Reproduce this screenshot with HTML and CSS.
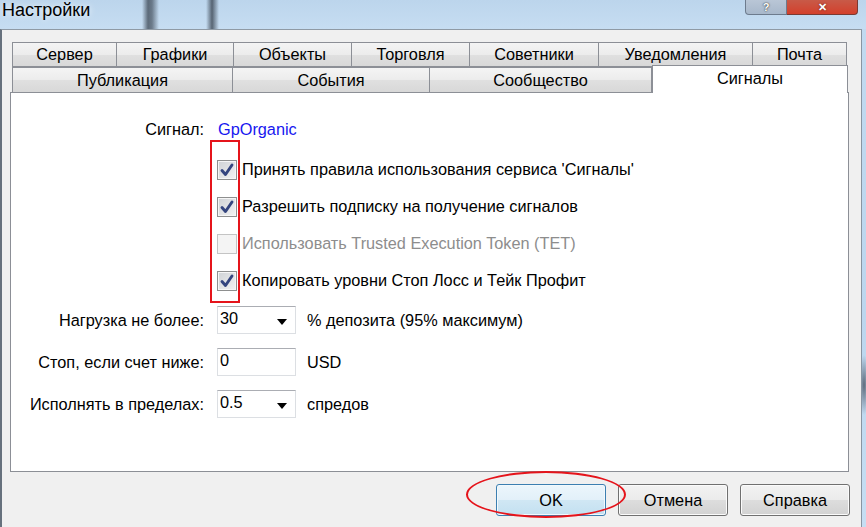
FILE: index.html
```html
<!DOCTYPE html>
<html lang="ru">
<head>
    <meta charset="UTF-8">
    <title>Настройки</title>
    <link rel="stylesheet" href="styles.css">
</head>
<body>
    <div class="window">
        <div class="titlebar">
            <span class="title">Настройки</span>
            <div class="caption">
                <span class="cap-help">?</span>
                <span class="cap-close">✕</span>
            </div>
        </div>
        <div class="client">
            <div class="tabs">
                <div class="tab-row row-top">
                    <div class="tab">Сервер</div>
                    <div class="tab">Графики</div>
                    <div class="tab">Объекты</div>
                    <div class="tab">Торговля</div>
                    <div class="tab">Советники</div>
                    <div class="tab">Уведомления</div>
                    <div class="tab">Почта</div>
                </div>
                <div class="tab-row row-bottom">
                    <div class="tab">Публикация</div>
                    <div class="tab">События</div>
                    <div class="tab">Сообщество</div>
                    <div class="tab active">Сигналы</div>
                </div>
                <div class="page">
                    <div class="form">
                        <div class="signal-row">
                            <span class="label">Сигнал:</span>
                            <span class="link">GpOrganic</span>
                        </div>
                        <div class="checks">
                            <div class="check-row">
                                <span class="box checked"><svg width="18" height="18" viewBox="0 0 18 18"><path d="M4 9.5L7.5 13.5L14 4" /></svg></span>
                                <span>Принять правила использования сервиса 'Сигналы'</span>
                            </div>
                            <div class="check-row">
                                <span class="box checked"><svg width="18" height="18" viewBox="0 0 18 18"><path d="M4 9.5L7.5 13.5L14 4" /></svg></span>
                                <span>Разрешить подписку на получение сигналов</span>
                            </div>
                            <div class="check-row disabled">
                                <span class="box"></span>
                                <span>Использовать Trusted Execution Token (TET)</span>
                            </div>
                            <div class="check-row">
                                <span class="box checked"><svg width="18" height="18" viewBox="0 0 18 18"><path d="M4 9.5L7.5 13.5L14 4" /></svg></span>
                                <span>Копировать уровни Стоп Лосс и Тейк Профит</span>
                            </div>
                        </div>
                        <div class="field-row">
                            <span class="label">Нагрузка не более:</span>
                            <div class="input combo">30<svg width="10" height="6" viewBox="0 0 10 6"><path d="M0 0H10L5 6Z" /></svg></div>
                            <span class="suffix">% депозита (95% максимум)</span>
                        </div>
                        <div class="field-row">
                            <span class="label">Стоп, если счет ниже:</span>
                            <div class="input">0</div>
                            <span class="suffix">USD</span>
                        </div>
                        <div class="field-row">
                            <span class="label">Исполнять в пределах:</span>
                            <div class="input combo">0.5<svg width="10" height="6" viewBox="0 0 10 6"><path d="M0 0H10L5 6Z" /></svg></div>
                            <span class="suffix">спредов</span>
                        </div>
                    </div>
                    <div class="mark-box"></div>
                </div>
            </div>
            <div class="buttons">
                <button class="btn default">OK</button>
                <button class="btn">Отмена</button>
                <button class="btn">Справка</button>
                <div class="mark-ellipse"></div>
            </div>
        </div>
    </div>
</body>
</html>
```

FILE: styles.css
```css
body{
    margin:0;
    padding:0;
    width:866px;
    height:527px;
    overflow:hidden;
    font-family:"Liberation Sans", Arial, sans-serif;
    font-size:16.3px;
    color:#000;
}
.window{
    height:527px;
    display:flex;
    flex-direction:column;
    background:
        radial-gradient(ellipse 6px 30px at 864px 385px, rgba(70,80,95,0.8), transparent),
        linear-gradient(to bottom, #c2daf0, #bcd6ee 60%, #c6def3);
}
.titlebar{
    height:29px;
    display:flex;
    justify-content:space-between;
    align-items:flex-start;
    background:
        linear-gradient(to right, transparent 142px, rgba(50,60,72,0.7) 148px, rgba(50,60,72,0.6) 152px, transparent 159px, transparent 206px, rgba(50,60,72,0.75) 212px, transparent 219px),
        linear-gradient(to bottom, #bcd5ec, #c6ddf2);
}
.title{
    font-size:18px;
    line-height:20px;
    margin-left:2px;
    text-shadow:0 0 6px rgba(255,255,255,0.9);
}
.caption{
    display:flex;
    margin-right:8px;
}
.caption span{
    height:15px;
    box-sizing:border-box;
    display:flex;
    justify-content:center;
    align-items:center;
    color:#fff;
    font-weight:bold;
    font-size:11px;
    line-height:13px;
}
.cap-help{
    width:42px;
    border:1px solid #6d7b8d;
    border-top:none;
    border-radius:0 0 0 4px;
    background:linear-gradient(to bottom, #b9c6d6, #a8b8cb);
    text-shadow:0 0 1px #333, 0 0 2px #555;
}
.cap-close{
    width:71px;
    border:1px solid #7a3a33;
    border-left:none;
    border-top:none;
    border-radius:0 0 4px 0;
    background:linear-gradient(to bottom, #c85a48, #d3402c);
    text-shadow:0 0 2px #5a1a12;
}
.client{
    flex:1;
    margin-right:4px;
    background:#f0f0f0;
    border-left:2px solid #66717d;
    border-right:1px solid #8995a2;
    border-top:1px solid #8f9aa5;
    display:flex;
    flex-direction:column;
}
.tabs{
    margin-top:12px;
    margin-left:8px;
    width:839px;
}
.tab-row{
    display:grid;
    height:25px;
    padding-left:2px;
}
.row-top{
    grid-template-columns:105px 117px 118px 118px 129px 154px 94px;
}
.row-bottom{
    grid-template-columns:221px 197px 222px 196px;
}
.tab{
    box-sizing:border-box;
    height:25px;
    display:flex;
    align-items:center;
    justify-content:center;
    border:1px solid #8c8f96;
    border-left:none;
    border-bottom:none;
    background:linear-gradient(to bottom, #f4f4f4, #ececec 50%, #e0e0e0 52%, #d8d8d8);
}
.tab:first-child{
    border-left:1px solid #8c8f96;
}
.row-top .tab{
    border-bottom:1px solid #8c8f96;
}
.tab.active{
    position:relative;
    z-index:1;
    height:28px;
    margin-top:-2px;
    background:#fff;
    border-left:1px solid #8c8f96;
    padding-bottom:3px;
}
.page{
    position:relative;
    height:380px;
    box-sizing:border-box;
    background:#fff;
    border:1px solid #8c8f96;
}
.form{
    padding-top:22px;
}
.label{
    width:193px;
    text-align:right;
    flex:none;
}
.signal-row{
    display:flex;
    align-items:center;
    height:28px;
    gap:14px;
}
.link{
    color:#1717f0;
}
.checks{
    margin-top:8px;
    padding-left:206px;
}
.check-row{
    display:flex;
    align-items:center;
    height:37px;
    gap:5px;
}
.box{
    width:20px;
    height:20px;
    box-sizing:border-box;
    border:1px solid #c4c4c4;
    background:#f4f4f4;
    display:flex;
    align-items:center;
    justify-content:center;
}
.box.checked{
    border-color:#8e8f8f;
    box-shadow:inset 0 0 0 1px #f6f6f6;
    background:linear-gradient(135deg, #cfd2d6, #f3f3f3);
}
.box svg path{
    fill:none;
    stroke:#34457f;
    stroke-width:2.9;
    stroke-linecap:round;
    stroke-linejoin:round;
}
.check-row.disabled{
    color:#8d8d8d;
}
.field-row{
    display:flex;
    align-items:center;
    height:42px;
}
.field-row:first-of-type{
    margin-top:1px;
}
.input{
    margin-left:13px;
    width:79px;
    height:28px;
    box-sizing:border-box;
    border:1px solid #dcdfe3;
    border-top-color:#abadb3;
    padding:1px 0 0 2px;
    line-height:21px;
    display:flex;
    justify-content:space-between;
    align-items:flex-start;
}
.combo svg{
    margin:11px 8px 0 0;
}
.suffix{
    margin-left:11px;
}
.mark-box{
    position:absolute;
    left:199px;
    top:47px;
    width:30px;
    height:163px;
    box-sizing:border-box;
    border:2px solid #e5141b;
}
.buttons{
    position:relative;
    display:flex;
    justify-content:flex-end;
    gap:12px;
    padding:12px 11px 0 0;
}
.btn{
    width:110px;
    height:32px;
    font-family:"Liberation Sans", Arial, sans-serif;
    font-size:16.3px;
    color:#000;
    border:1px solid #707070;
    border-radius:3px;
    box-shadow:inset 0 0 0 1px #fbfbfb;
    background:linear-gradient(to bottom, #f2f2f2, #ebebeb 50%, #dddddd 51%, #d2d2d2);
    padding:0;
}
.btn.default{
    border-color:#3c7fb1;
    box-shadow:inset 0 0 0 1px #f2f9fd;
    background:linear-gradient(to bottom, #ecf6fc, #e2f0f9 50%, #d0e7f4 51%, #c3e0f1);
}
.mark-ellipse{
    position:absolute;
    left:464px;
    top:-1px;
    width:160px;
    height:47px;
    box-sizing:border-box;
    border:2px solid #e5141b;
    border-radius:50%;
}
```
